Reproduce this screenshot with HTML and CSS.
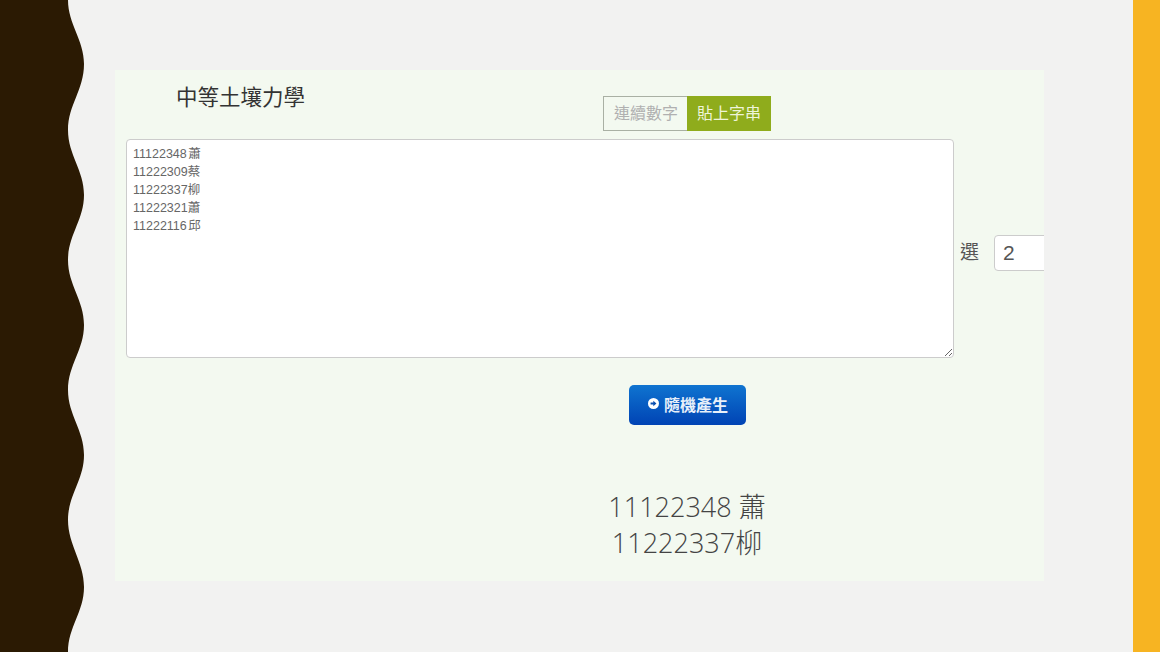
FILE: index.html

```html
<!DOCTYPE html>
<html lang="zh-Hant">
<head>
  <meta charset="UTF-8" />
  <title>中等土壤力學</title>
  <link rel="stylesheet" href="styles.css">
</head>
<body>
  <div class="slide">
    <svg class="wave" width="85" height="652" viewBox="0 0 85 652">
      <path fill="#2b1a03" d="M0 0H68C68 24 84 40 84 64C84 90 68 105 68 130C68 155 84 170 84 195C84 220 68 235 68 260C68 285 84 300 84 325C84 350 68 365 68 390C68 415 84 430 84 455C84 480 68 495 68 520C68 545 84 562 84 587C84 612 68 627 68 652H0Z"/>
    </svg>
    <main class="content">
      <section class="panel">
        <div class="inner">
          <div class="top">
            <h1 class="title">中等土壤力學</h1>
            <div class="toggle">
              <span class="tab">連續數字</span>
              <span class="tab active">貼上字串</span>
            </div>
          </div>
          <form class="picker">
            <textarea class="names">11122348 蕭
11222309蔡
11222337柳
11222321蕭
11222116 邱</textarea>
            <label class="pick-label" for="count">選</label>
            <input class="count" id="count" value="2" />
          </form>
          <div class="actions">
            <button class="go" type="button">
              <svg width="11" height="11" viewBox="0 0 12 12">
                <circle cx="6" cy="6" r="6" fill="#fff"/>
                <path fill="#0a4fb0" d="M2.8 5h3V3l3.4 3-3.4 3V7h-3z"/>
              </svg>
              隨機產生
            </button>
          </div>
          <div class="result">
            <div>11122348 蕭</div>
            <div>11222337柳</div>
          </div>
        </div>
      </section>
    </main>
    <div class="bar"></div>
  </div>
</body>
</html>
```

FILE: styles.css

```css
html, body {
  margin: 0;
  height: 100%;
  overflow: hidden;
}
body {
  background: #f2f2f1;
  font-family: "Liberation Sans", "Noto Sans CJK TC", sans-serif;
  color: #555;
}
.slide {
  display: flex;
  height: 652px;
}
.wave {
  flex: none;
  display: block;
  width: 85px;
}
.content {
  flex: 1;
  padding: 70px 0 0 30px;
}
.bar {
  flex: none;
  width: 27px;
  background: #f7b422;
}
.panel {
  width: 929px;
  height: 511px;
  background: #f3f9f0;
  overflow: hidden;
}
.inner {
  width: 1122px;
  margin-left: 11px;
}
.top {
  display: grid;
  grid-template-columns: 1fr auto 1fr;
  height: 61px;
}
.title {
  margin: 13px 0 0 50px;
  font-size: 21.5px;
  line-height: 30px;
  font-weight: 400;
  color: #333;
}
.toggle {
  display: flex;
  align-self: end;
  height: 35px;
}
.tab {
  padding: 0 9px 0 10px;
  font-size: 16px;
  line-height: 33px;
  color: #b0b0b0;
  border: 1px solid #a9b0a4;
  border-right: none;
}
.tab.active {
  padding: 0 10px;
  background: #8fac1c;
  border: none;
  line-height: 35px;
  color: #eef4d8;
}
.picker {
  display: flex;
  align-items: center;
  margin-top: 8px;
}
.names {
  box-sizing: border-box;
  flex: none;
  width: 828px;
  height: 219px;
  padding: 5px 6px;
  border: 1px solid #ccc;
  border-radius: 4px;
  background: #fff;
  font-family: inherit;
  font-size: 12.5px;
  line-height: 18px;
  word-spacing: -2px;
  color: #666;
  outline: none;
}
.pick-label {
  margin: 4px 15px 0 6px;
  font-size: 19px;
}
.count {
  box-sizing: border-box;
  width: 100px;
  height: 36px;
  margin-top: 9px;
  padding: 0 8px;
  border: 1px solid #ccc;
  border-radius: 4px;
  background: #fff;
  font-family: inherit;
  font-size: 21px;
  color: #555;
}
.actions {
  display: flex;
  justify-content: center;
  margin-top: 27px;
}
.go {
  display: flex;
  align-items: center;
  justify-content: center;
  gap: 5px;
  width: 117px;
  height: 40px;
  padding: 0 0 3px 2px;
  border: none;
  border-radius: 5px;
  background: linear-gradient(#0f74d0, #0043b4);
  font-family: inherit;
  font-size: 16px;
  font-weight: bold;
  color: #e8f0fa;
}
.result {
  margin-top: 64px;
  text-align: center;
  font-family: "Open Sans", "Noto Sans CJK TC", sans-serif;
  font-size: 27px;
  font-weight: 300;
  line-height: 36px;
  color: #444;
}
```
